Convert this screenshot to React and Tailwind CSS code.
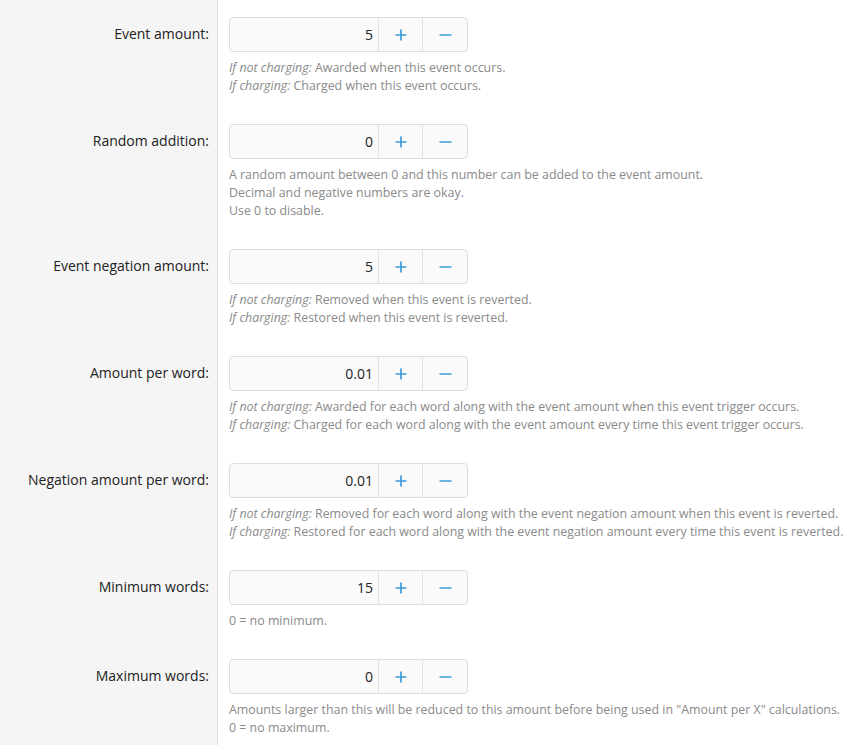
import React from "react";

const rows = [
  { label: "Event amount:", value: "5", help: [[ "If not charging:", " Awarded when this event occurs." ], [ "If charging:", " Charged when this event occurs." ]] },
  { label: "Random addition:", value: "0", help: [[null, "A random amount between 0 and this number can be added to the event amount."], [null, "Decimal and negative numbers are okay."], [null, "Use 0 to disable."]] },
  { label: "Event negation amount:", value: "5", help: [[ "If not charging:", " Removed when this event is reverted." ], [ "If charging:", " Restored when this event is reverted." ]] },
  { label: "Amount per word:", value: "0.01", help: [[ "If not charging:", " Awarded for each word along with the event amount when this event trigger occurs." ], [ "If charging:", " Charged for each word along with the event amount every time this event trigger occurs." ]] },
  { label: "Negation amount per word:", value: "0.01", help: [[ "If not charging:", " Removed for each word along with the event negation amount when this event is reverted." ], [ "If charging:", " Restored for each word along with the event negation amount every time this event is reverted." ]] },
  { label: "Minimum words:", value: "15", help: [[null, "0 = no minimum."]] },
  { label: "Maximum words:", value: "0", help: [[null, "Amounts larger than this will be reduced to this amount before being used in \"Amount per X\" calculations."], [null, "0 = no maximum."]] },
];

function Row({ row }) {
  return (
    <div className="grid grid-cols-[218px_1fr]">
      <div className="bg-[#f5f5f5] border-r border-[#e3e3e3] pt-[17px] pr-[8px] text-right">
        <div className="h-[34px] leading-[34px] text-[14px] text-[#222]">{row.label}</div>
      </div>
      <div className="pl-[11px] pt-[17px] pb-[12px]">
        <div className="flex w-[239px] h-[35px] border border-[#dedede] rounded-[4px] bg-[#fafafa] overflow-hidden">
          <div className="flex-1 text-right pr-[5px] leading-[33px] text-[14px] text-[#222]">{row.value}</div>
          <div className="w-[44px] border-l border-[#e3e3e3] flex items-center justify-center">
            <svg width="12" height="12" viewBox="0 0 12 12"><path d="M6 0.5V11.5M0.5 6H11.5" stroke="#3d9ad8" strokeWidth="1.7" /></svg>
          </div>
          <div className="w-[45px] border-l border-[#e3e3e3] flex items-center justify-center">
            <svg width="13" height="12" viewBox="0 0 13 12"><path d="M0.5 6H12.5" stroke="#3d9ad8" strokeWidth="1.7" /></svg>
          </div>
        </div>
        <div className="mt-[7px] text-[12.4px] leading-[18px] text-[#8a8a8a] whitespace-nowrap">
          {row.help.map((h, i) => (
            <div key={i}>
              {h[0] && <i>{h[0]}</i>}
              {h[1]}
            </div>
          ))}
        </div>
      </div>
    </div>
  );
}

export default function App() {
  return (
    <div className="w-[866px] h-[745px] overflow-hidden bg-white" style={{ fontFamily: '"Open Sans", "Noto Sans", sans-serif' }}>
      {rows.map((r, i) => (
        <Row key={i} row={r} />
      ))}
      <div className="grid grid-cols-[218px_1fr] h-[200px]">
        <div className="bg-[#f5f5f5] border-r border-[#e3e3e3]" />
        <div />
      </div>
    </div>
  );
}
